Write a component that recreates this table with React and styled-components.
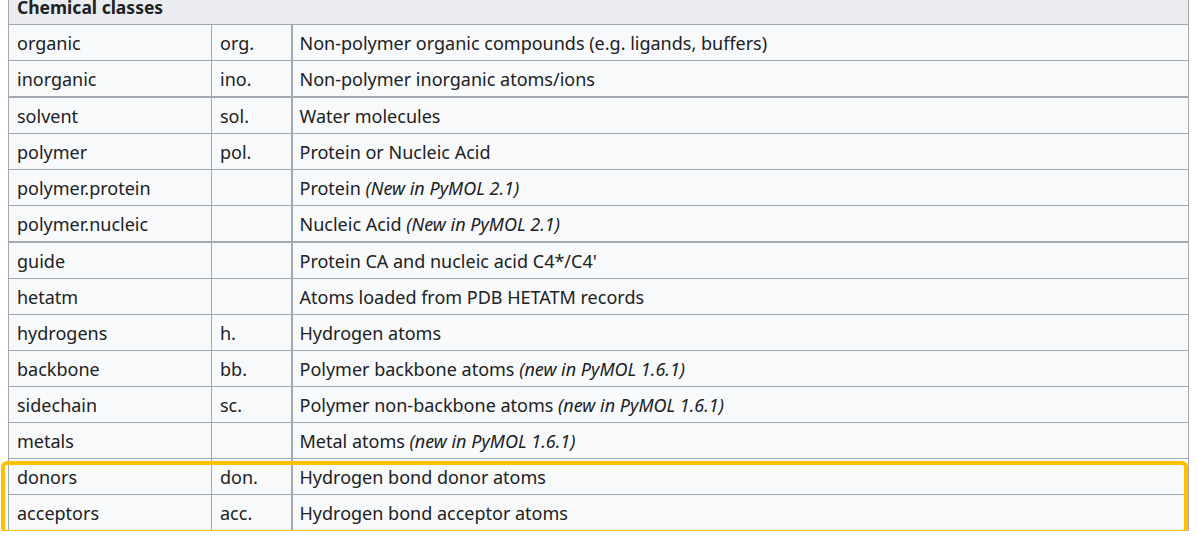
import React from "react";
import styled, { createGlobalStyle } from "styled-components";

const GlobalStyle = createGlobalStyle`
  html, body {
    margin: 0;
    padding: 0;
    background: #ffffff;
  }
  body {
    font-family: "Noto Sans", "Liberation Sans", sans-serif;
    color: #202122;
  }
`;

const Page = styled.div`
  padding: 0 9px 0 8px;
  margin-top: -12px;
`;

const Frame = styled.div`
  position: relative;
`;

const Table = styled.table`
  width: 100%;
  border-collapse: collapse;
  background: #f8f9fa;
  border: 1px solid #a2a9b1;
  font-size: 18px;
  line-height: 24px;
  table-layout: fixed;
`;

const HeadCell = styled.th`
  background: #eaecf0;
  text-align: left;
  font-weight: 700;
  font-size: 17.5px;
  padding: 6px 8px 5px;
  border: 1px solid #a2a9b1;
`;

const Row = styled.tr`
  border-top: ${({ $group }) => ($group ? "2px" : "1px")} solid #a2a9b1;
`;

const Cell = styled.td`
  padding: 6px 8px 5px;
  height: 24px;
  border: 1px solid #a2a9b1;
  border-top: inherit;
  white-space: nowrap;
  ${({ $desc }) => $desc && "border-left: 2px solid #a2a9b1; padding-left: 7px;"}
`;

const Note = styled.i`
  font-style: italic;
`;

const Highlight = styled.div`
  position: absolute;
  left: -7px;
  right: 1px;
  top: 473px;
  height: 73px;
  box-sizing: border-box;
  border: 4px solid #ffc000;
  border-radius: 6px;
  pointer-events: none;
`;

const rows = [
  ["organic", "org.", "Non-polymer organic compounds (e.g. ligands, buffers)"],
  ["inorganic", "ino.", "Non-polymer inorganic atoms/ions"],
  ["solvent", "sol.", "Water molecules", null, true],
  ["polymer", "pol.", "Protein or Nucleic Acid"],
  ["polymer.protein", "", "Protein ", "(New in PyMOL 2.1)"],
  ["polymer.nucleic", "", "Nucleic Acid ", "(New in PyMOL 2.1)"],
  ["guide", "", "Protein CA and nucleic acid C4*/C4'", null, true],
  ["hetatm", "", "Atoms loaded from PDB HETATM records"],
  ["hydrogens", "h.", "Hydrogen atoms"],
  ["backbone", "bb.", "Polymer backbone atoms ", "(new in PyMOL 1.6.1)"],
  ["sidechain", "sc.", "Polymer non-backbone atoms ", "(new in PyMOL 1.6.1)"],
  ["metals", "", "Metal atoms ", "(new in PyMOL 1.6.1)"],
  ["donors", "don.", "Hydrogen bond donor atoms"],
  ["acceptors", "acc.", "Hydrogen bond acceptor atoms"],
];

export default function App() {
  return (
    <Page>
      <GlobalStyle />
      <Frame>
        <Table>
          <colgroup>
            <col style={{ width: "203px" }} />
            <col style={{ width: "80px" }} />
            <col />
          </colgroup>
          <thead>
            <tr>
              <HeadCell colSpan={3}>Chemical classes</HeadCell>
            </tr>
          </thead>
          <tbody>
            {rows.map(([name, short, desc, note, group]) => (
              <Row key={name} $group={group}>
                <Cell>{name}</Cell>
                <Cell>{short}</Cell>
                <Cell $desc>
                  {desc}
                  {note && <Note>{note}</Note>}
                </Cell>
              </Row>
            ))}
          </tbody>
        </Table>
        <Highlight />
      </Frame>
    </Page>
  );
}
